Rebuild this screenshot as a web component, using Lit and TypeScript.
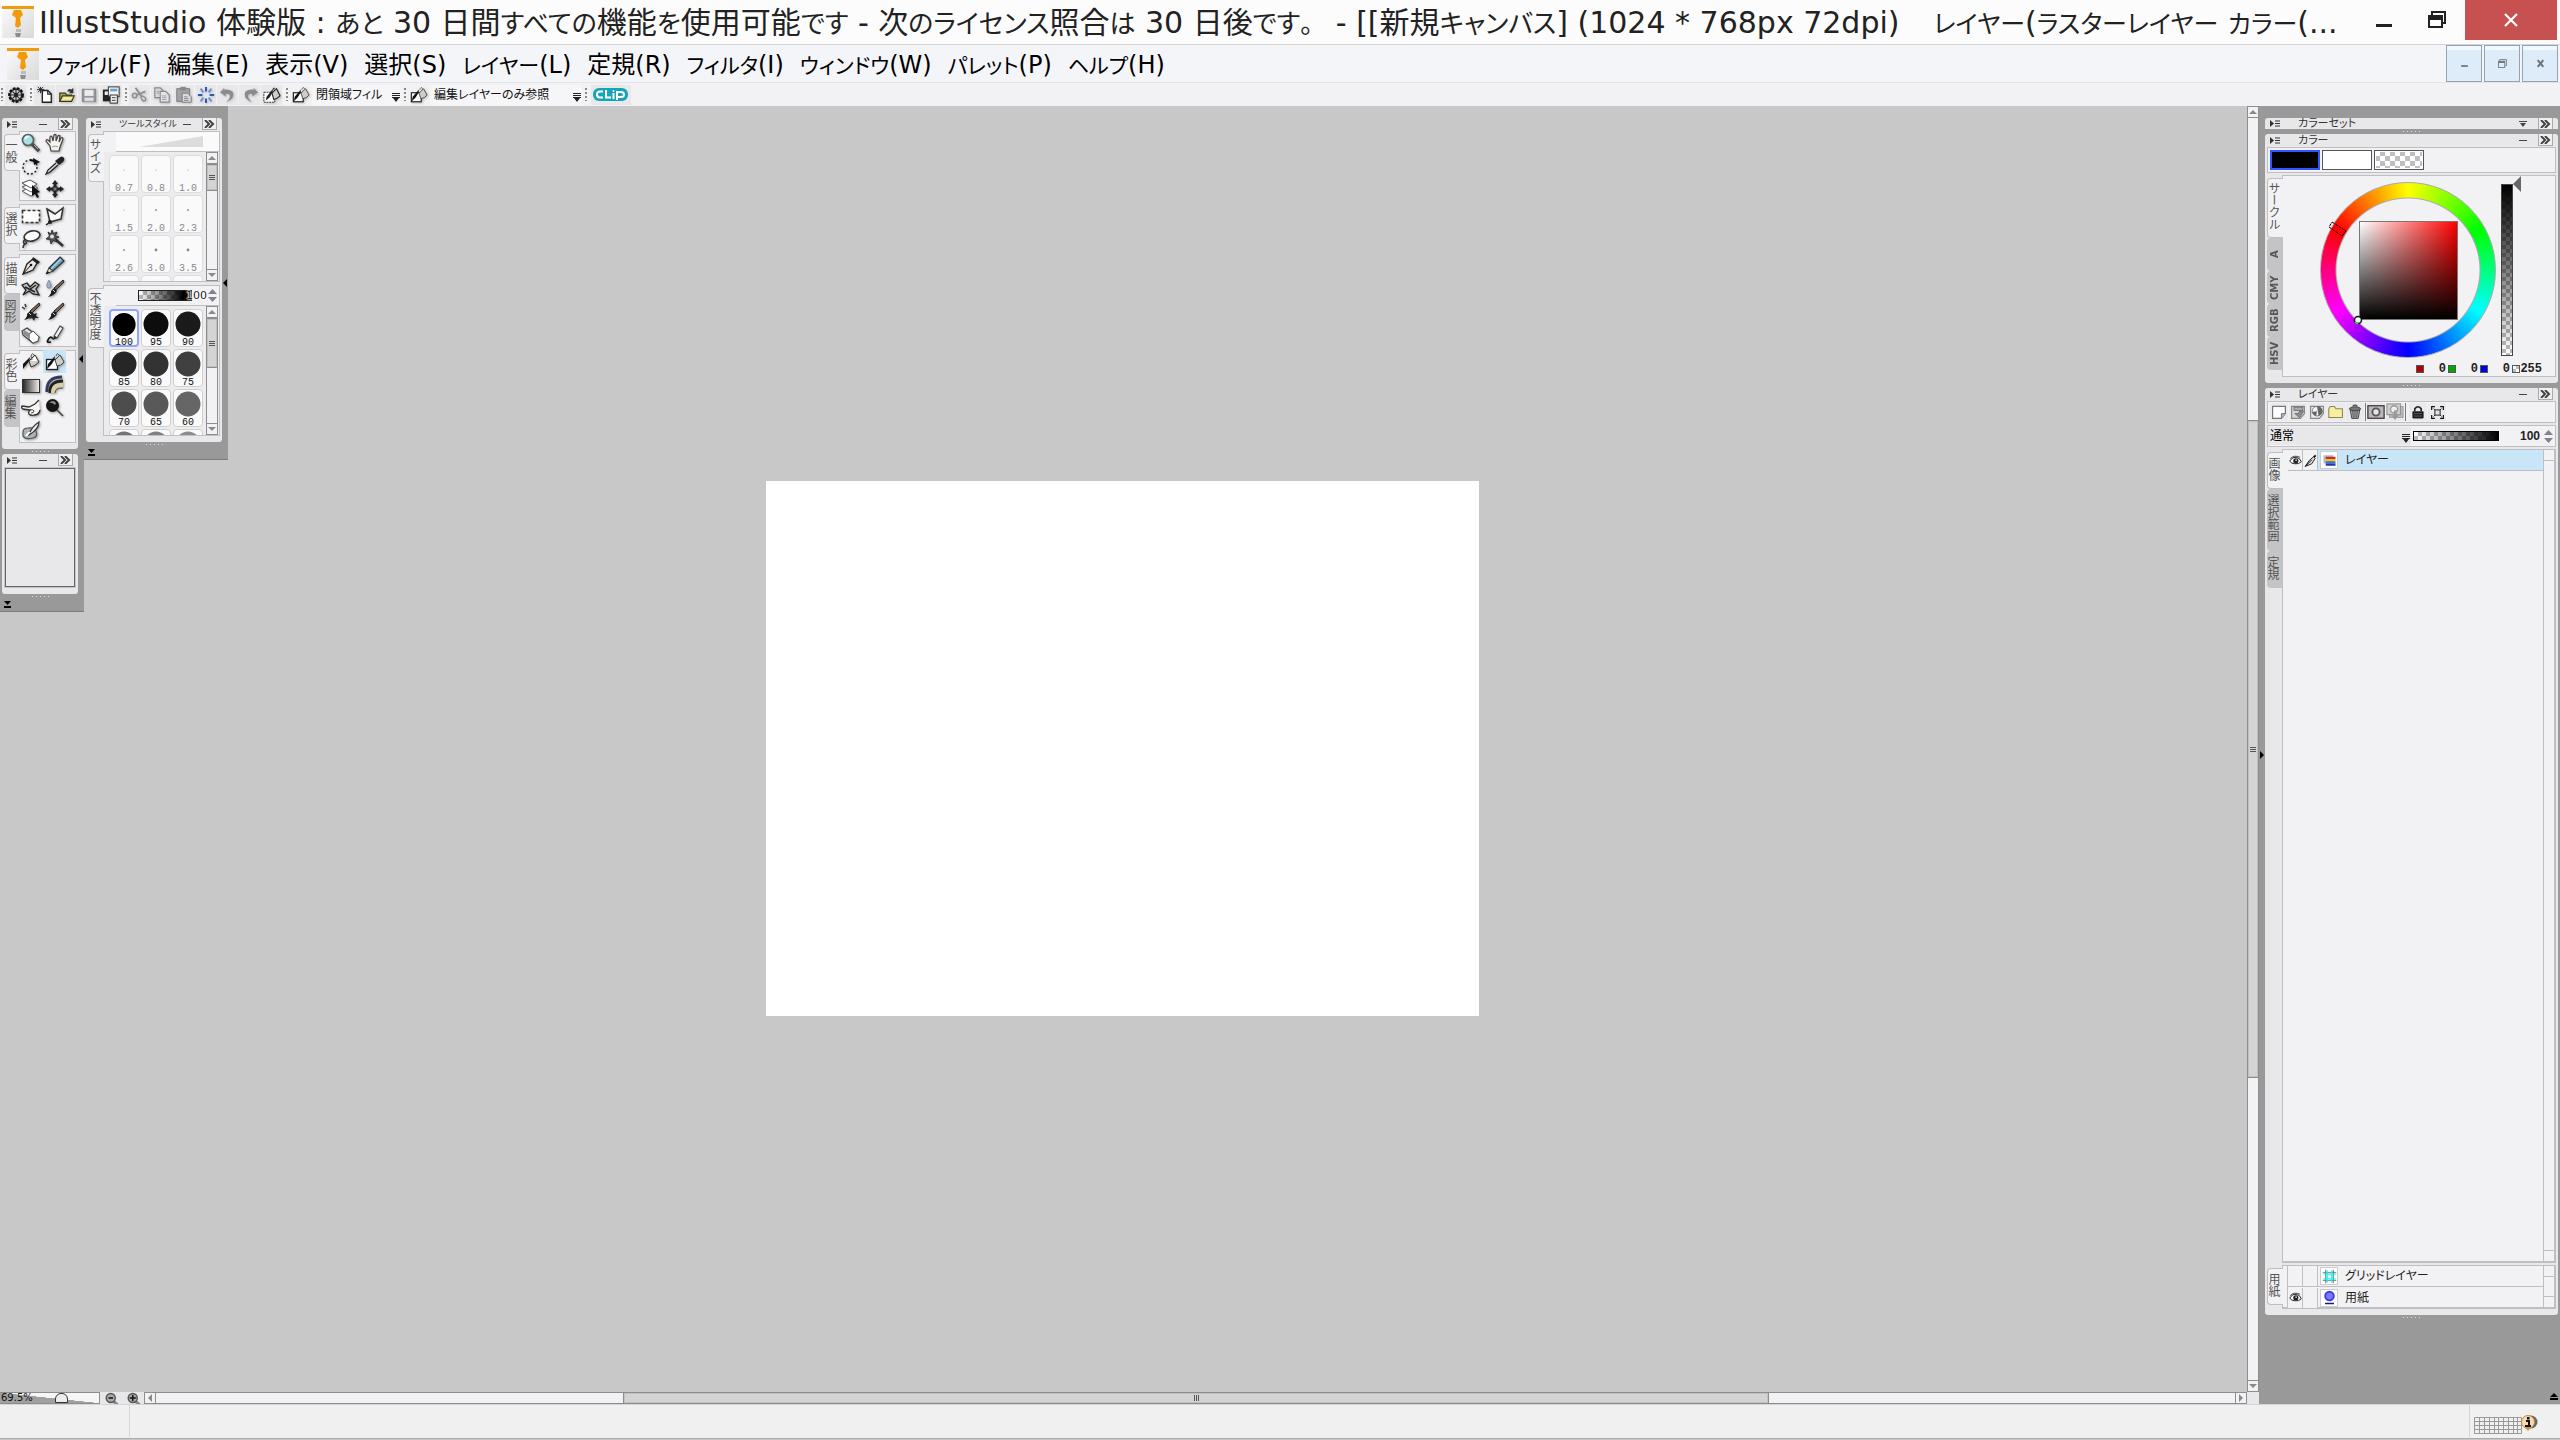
import { LitElement, html, svg, css, nothing } from "lit";
import { customElement, property } from "lit/decorators.js";
import { classMap } from "lit/directives/class-map.js";
import { styleMap } from "lit/directives/style-map.js";

const bucket = svg`
  <path d="M8 9 L14 3 L18 10 Q14 14 10 15 Z" fill="#cfcfca" stroke="#333" stroke-width="1"/>
  <path d="M10 9 L14 4 L16 9 Z" fill="#fff"/>
  <path d="M13 3 Q11 0 10 4 L11 8" fill="none" stroke="#555" stroke-width="1"/>
  <path d="M9 5 L2 12 L2 17 L5 13 Q9 9 9 5Z" fill="#111"/>`;

const brush = svg`
  <path d="M18 1 L19 3 L11 11 L9 9 Z" fill="#7a6656" stroke="#2a2320" stroke-width="1"/>
  <path d="M9 9 L12 12 Q9 17 3 18 Q7 14 6 12 Z" fill="#1a1a1a"/>
  <path d="M8 11 L10 13" stroke="#ddd" stroke-width="1"/>`;

const ICONS: Record<string, unknown> = {
  zoom: svg`<circle cx="7" cy="7" r="5.5" fill="#a9dfe0" stroke="#55605f" stroke-width="1.6"/><path d="M4 6 Q5 3 8 3.500" stroke="#fff" stroke-width="1.500" fill="none"/><path d="M11 11 L18 18" stroke="#4a4a4a" stroke-width="3.500"/><path d="M13 12 L17 16" stroke="#aaa" stroke-width="1"/>`,
  hand: svg`<path d="M6 18 L5 13 L1 8 Q1 6 3 7 L5 9 L5 4 Q6 2 7 4 L8 8 L9 2 Q10 1 11 2 L11 8 L13 3 Q14 2 15 3 L14 9 L16 5 Q18 4 18 6 L15 14 L14 18 Z" fill="#f6f2ee" stroke="#444" stroke-width="1.2"/><path d="M7 14 Q10 12 13 14" stroke="#999" fill="none"/>`,
  rotate: svg`<circle cx="9" cy="11" r="7" fill="none" stroke="#222" stroke-width="1.4" stroke-dasharray="2 2"/><path d="M12 2 L19 6 L13 9 Z" fill="#111"/><path d="M9 4 L14 5" stroke="#111" stroke-width="2"/>`,
  dropper: svg`<path d="M19 2 Q17 -1 14 2 L10 5 L14 9 L18 6 Q20 4 19 2Z" fill="#222"/><path d="M11 7 L3 14 L1 18 L5 16 L13 9" fill="#cfd6da" stroke="#222" stroke-width="1.200"/>`,
  layersel: svg`<path d="M1 12 L9 9 L17 13 L10 17 Z" fill="#fff" stroke="#666"/><path d="M1 8 L9 5 L17 9 L10 13 Z" fill="#fff" stroke="#666"/><path d="M1 4 L9 1 L16 5 L10 9 Z" fill="#fff" stroke="#555"/><path d="M11 6 L11 17 L14 15 L16 19 L18 18 L16 14 L19 13 Z" fill="#111"/>`,
  move: svg`<path d="M10 1 L13 5 H11.500 V8.500 H15 V7 L19 10 L15 13 V11.500 H11.500 V15 H13 L10 19 L7 15 H8.500 V11.500 H5 V13 L1 10 L5 7 V8.500 H8.500 V5 H7 Z" fill="#222"/><rect x="8" y="8" width="4" height="4" fill="#777" stroke="#222"/>`,
  marquee: svg`<rect x="1.500" y="4.500" width="17" height="12" fill="#fdfdfd" stroke="#333" stroke-width="1.600" stroke-dasharray="3 2"/>`,
  poly: svg`<path d="M2 3 L10 8 L18 2 L16 13 L5 16 Z" fill="#f8f8f8" stroke="#333" stroke-width="1.500"/><circle cx="5" cy="16" r="2" fill="#222"/><path d="M5 16 L1 19" stroke="#222" stroke-width="1.500"/>`,
  lasso: svg`<ellipse cx="11" cy="7" rx="8" ry="5" transform="rotate(-14 11 7)" fill="#fafafa" stroke="#333" stroke-width="1.600"/><path d="M4 10 Q1 14 4 15 Q7 14 4 12 M4 15 Q2 16 2 19" fill="none" stroke="#333" stroke-width="1.500"/>`,
  wand: svg`<path d="M9 9 L18 17" stroke="#333" stroke-width="2.500"/><path d="M7 1 L8.500 4.500 L12 3 L10.500 7 L14 8 L10.500 9.500 L12 13 L8 11.500 L6 15 L5 10.500 L1 10 L4.500 7 L3 3 L6 5 Z" fill="#555" stroke="#222" stroke-width=".8"/><circle cx="7" cy="7.500" r="2" fill="#ddd"/>`,
  pen: svg`<path d="M12 3 L16 7 L12 14 L2 18 L6 8 Z" fill="#e8e6e2" stroke="#222" stroke-width="1.300"/><path d="M2 18 L10 9" stroke="#111"/><path d="M12 1 L19 6 L17 8 L11 4Z" fill="#222"/><circle cx="10" cy="9" r="1.300" fill="#111"/>`,
  pencil: svg`<path d="M15 1 L19 5 L8 15 L4 12 Z" fill="#6f9bb8" stroke="#26343e" stroke-width="1.200"/><path d="M16 3 L6 13" stroke="#b9d3e3" stroke-width="1.300"/><path d="M4 12 L8 15 L1 18 Z" fill="#e6d7c3" stroke="#333"/><path d="M3 15 L1 18 L4 17Z" fill="#111"/>`,
  pattern: svg`<path d="M1 6 L6 4 L9 8 L14 3 L18 6 L15 10 L18 16 L12 15 L8 12 L2 16 L5 11 Z" fill="#b9c0ba" stroke="#222" stroke-width="1.300"/><path d="M4 8 L14 13 M8 11 L15 6" stroke="#222" stroke-width="1.500"/>`,
  waterbrush: svg`${brush}<path d="M4 1 Q0 7 3 9 Q7 9 6 6 Z" fill="#9fb0c8" stroke="#7788a0" stroke-width=".8"/>`,
  decobrush: svg`${brush}<path d="M11 10 L13 12 L16 11 L15 14 L18 16 L14 16 L13 19 L11 16 L8 17 L10 14 Z" fill="#222"/><path d="M4 2 L5 5 M1 5 L4 7" stroke="#333" stroke-width="1.500"/>`,
  brush,
  eraser: svg`<path d="M1 6 L6 3 L18 12 L17 16 L12 18 L2 10 Z" fill="#ddd" stroke="#444" stroke-width="1.200"/><path d="M8 9 L12 6 L18 12 L17 16 L12 18 L8 14Z" fill="#fff" stroke="#555"/><path d="M3 5 L9 9 L8 13 L2 9Z" fill="#8d8d8d"/>`,
  line: svg`<path d="M15 1 L18 3 L12 13 L9 11 Z" fill="#efefef" stroke="#444" stroke-width="1.100"/><path d="M9 11 L12 13 L8 15 Z" fill="#222"/><path d="M8 14 Q5 10 3 15 Q1 18 6 17" fill="none" stroke="#111" stroke-width="1.700"/>`,
  bucket,
  closedfill: svg`<rect x="1.500" y="7.500" width="11" height="10" fill="#fff" stroke="#222" stroke-width="1.300"/><path d="M10 8 L15 3 L19 10 Q16 14 12 14 Z" fill="#cfcfca" stroke="#444"/><path d="M14 3 Q12 0 11 4" fill="none" stroke="#555"/><path d="M10 4 L3 12 L2 17 L6 13 Q10 8 10 4Z" fill="#111"/>`,
  gradient: svg`<defs><linearGradient id="gr"><stop offset="0" stop-color="#222"/><stop offset="1" stop-color="#f6f0ee"/></linearGradient></defs><rect x="1.500" y="4.500" width="17" height="13" fill="url(#gr)" stroke="#333"/>`,
  curve: svg`<path d="M2 17 Q1 2 17 2" fill="none" stroke="#333b60" stroke-width="3"/><path d="M5 18 Q4 6 18 6" fill="none" stroke="#222" stroke-width="3"/><path d="M8 18 Q8 9 18 10" fill="none" stroke="#d6d2a4" stroke-width="4"/><path d="M10 18 Q10 13 18 13" fill="none" stroke="#555" stroke-width="1"/>`,
  finger: svg`<path d="M18 2 L14 6 L8 9 L1 8 Q0 10 2 11 L9 12 Q7 14 8 16 Q10 18 13 17 Q18 17 19 12" fill="#f8f5f0" stroke="#333" stroke-width="1.300"/><path d="M9 12 Q12 11 13 13 Q13 15 10 15" fill="none" stroke="#444"/>`,
  dodge: svg`<path d="M11 11 L18 18" stroke="#444" stroke-width="1.600"/><circle cx="7.500" cy="7.500" r="6.500" fill="#151515"/><path d="M4 5 Q8 1 11 5 L10 7 Q7 4 4 5Z" fill="#8d8d8d"/>`,
  blur: svg`<path d="M2 11 Q2 7 7 7 Q13 6 15 10 Q17 16 12 17 Q4 19 2 15 Z" fill="#a9b4ad" stroke="#555" stroke-width="1.200"/><path d="M18 1 Q18 8 8 14 Q10 6 18 1Z" fill="#e9e9e5" stroke="#333" stroke-width="1.200"/><path d="M5 15 Q8 11 9 12" stroke="#fff" stroke-width="2" fill="none"/>`,

  gear: svg`<circle cx="10" cy="10" r="7.500" fill="#3a3a3a" stroke="#111" stroke-width="2.500" stroke-dasharray="3 1.500"/><circle cx="10" cy="10" r="5.500" fill="#d8d8d8"/><path d="M10 4V16M4 10H16M6 6L14 14M14 6L6 14" stroke="#222" stroke-width="1.300"/><circle cx="10" cy="10" r="2.200" fill="#222"/>`,
  newdoc: svg`<path d="M7 5 H13 L17 9 V18 H7 Z" fill="#fff" stroke="#222" stroke-width="1.500"/><path d="M13 5 V9 H17" fill="none" stroke="#222" stroke-width="1.200"/><path d="M5 1V8M1 4H9M2 1L8 7M8 1L2 7" stroke="#222" stroke-width="1"/>`,
  open: svg`<path d="M2 8 H8 L10 10 H15 V17 H2 Z" fill="#b4ab5a" stroke="#3b3716" stroke-width="1.300"/><path d="M5 11 H18 L15 17 H2 Z" fill="#f1eb9a" stroke="#3b3716" stroke-width="1.300"/><path d="M10 6 Q12 2 15 4 L17 2 V8 H12 L14 6" fill="#333"/>`,
  save: svg`<path d="M2 3 H18 V18 H2 Z" fill="#9a9a9e"/><rect x="5" y="3" width="10" height="8" fill="#ededf0"/><rect x="5" y="13" width="10" height="5" fill="#e2e2e6"/><rect x="3" y="4" width="14" height="13" fill="none" stroke="#88888c"/>`,
  saveall: svg`<rect x="1" y="4" width="12" height="13" fill="#222"/><rect x="3" y="6" width="7" height="4" fill="#eee"/><rect x="7" y="1" width="12" height="11" fill="#f6f6f6" stroke="#222"/><rect x="9" y="3" width="8" height="3" fill="#6aa5cf"/><rect x="9" y="10" width="8" height="9" fill="#eee" stroke="#222"/><path d="M11 13H15M11 16H15" stroke="#333"/>`,
  cut: svg`<path d="M5 2 L12 12 M16 6 L6 10" stroke="#8e8e92" stroke-width="2"/><circle cx="4" cy="10.500" r="2.500" fill="none" stroke="#8e8e92" stroke-width="1.600"/><path d="M11 11 Q18 12 16 16 Q12 18 11 12" fill="none" stroke="#8e8e92" stroke-width="1.600"/>`,
  copy: svg`<path d="M2 2 H8 L11 5 V13 H2Z" fill="#d8d8dc" stroke="#88888c" stroke-width="1.300"/><path d="M8 6 H14 L18 10 V18 H8Z" fill="#e4e4e8" stroke="#88888c" stroke-width="1.300"/><path d="M10 11H15M10 13H15M10 15H15M4 6H7M4 8H7" stroke="#9a9a9e"/>`,
  paste: svg`<rect x="2" y="3" width="14" height="14" fill="#a2a2a6" stroke="#77777b"/><rect x="6" y="1" width="6" height="4" fill="#88888c"/><path d="M8 8 H14 L18 12 V18 H8Z" fill="#dadade" stroke="#77777b"/><path d="M10 12H14M10 14H15M10 16H15" stroke="#88888c"/>`,
  burst: svg`<g stroke="#2b58b8" stroke-width="2.200"><path d="M10 1V6M10 14V19M1 10H6M14 10H19"/><path d="M4 3L7 7M16 3L13 7M4 17L7 13M16 17L13 13" stroke="#6e92d6"/></g>`,
  undo: svg`<path d="M3 4 Q16 3 16 9 Q16 15 8 18 Q13 13 12 10 Q11 8 7 9 L8 12 L1 7 L7 2" fill="#8a8a8e"/>`,
  redo: svg`<path d="M17 4 Q4 3 4 9 Q4 15 12 18 Q7 13 8 10 Q9 8 13 9 L12 12 L19 7 L13 2" fill="#8a8a8e"/>`,
  fillsel: svg`<rect x="1" y="7" width="12" height="11" fill="#fff" stroke="#222" stroke-dasharray="2 1"/><path d="M10 8 L15 3 L19 11 Q16 14 12 15 Z" fill="#cfcfca" stroke="#222" stroke-width="1.200"/><path d="M13 4 Q13 0 11 3 L4 12 L3 16 L7 13 Q11 8 11 4" fill="#222"/>`,

  newlayer: svg`<path d="M2 3 H18 V12 L13 18 H2 Z" fill="#fcfcfc" stroke="#777" stroke-width="1.500"/><path d="M18 12 H13 V18" fill="#b5b5b5" stroke="#777" stroke-width="1.200"/>`,
  mergelayer: svg`<path d="M2 3 H18 V12 L13 18 H2 Z" fill="#d6d6d6" stroke="#888" stroke-width="1.500"/><rect x="5" y="4" width="11" height="4" fill="#aaa" stroke="#666"/><path d="M12 9 H17 L12 17 L6 12 H10Z" fill="#8b8b8b" stroke="#666"/>`,
  masklayer: svg`<path d="M2 3 H18 V12 L13 18 H2 Z" fill="#eee" stroke="#888" stroke-width="1.500"/><circle cx="10" cy="9" r="6" fill="#f5f5f5" stroke="#666"/><path d="M10 3 A6 6 0 0 1 12 15 Z M10 9 L4 10 Q5 14 9 15Z" fill="#666"/>`,
  folder: svg`<path d="M1 6 L3 3 H8 L10 6 H18 V17 H1 Z" fill="#f7eea0" stroke="#8b8552" stroke-width="1.300"/>`,
  trash: svg`<path d="M4 7 H16 L14 18 H6 Z" fill="#aaa" stroke="#444" stroke-width="1.200"/><path d="M7 8 L8 17 M10 8 V17 M13 8 L12 17" stroke="#444"/><ellipse cx="10" cy="6" rx="7" ry="2.500" fill="#777" stroke="#333"/><path d="M7 3 Q10 0 13 3" stroke="#444" fill="none" stroke-width="1.500"/>`,
  mask: svg`<rect x="1" y="3" width="18" height="14" fill="#b9b9bc" stroke="#4b4046" stroke-width="1.500"/><circle cx="10" cy="10" r="4" fill="#e6e6e6" stroke="#555" stroke-width="2"/>`,
  maskapply: svg`<rect x="4" y="4" width="15" height="12" fill="#bbb" stroke="#999"/><rect x="1" y="1" width="15" height="12" fill="#cfcfcf" stroke="#888"/><circle cx="9" cy="7" r="4" fill="#eee" stroke="#999" stroke-width="1.500"/><path d="M9 8 V14 H6 L10 19 L14 14 H12 V8Z" fill="#999"/>`,
  lock: svg`<path d="M6 9 V6 Q10 1 14 6 V9" fill="none" stroke="#222" stroke-width="2"/><rect x="3" y="9" width="14" height="9" rx="1" fill="#1e1e22"/><path d="M5 12H15M5 15H15" stroke="#666" stroke-width="1"/>`,
  frame: svg`<path d="M6 1H1V6M14 1H19V6M6 19H1V14M14 19H19V14" fill="none" stroke="#111" stroke-width="1.800"/><path d="M4 4L6 6M16 4L14 6M4 16L6 14M16 16L14 14" stroke="#111" stroke-width="1.500"/><rect x="6" y="6" width="8" height="8" fill="#dfe0ee" stroke="#111" stroke-width="1.400"/>`,
  eye: svg`<path d="M1 11 Q5 4 11 5 Q17 6 19 12 Q15 16 9 15 Q4 15 1 11Z" fill="#fff" stroke="#222" stroke-width="1.500"/><circle cx="10.500" cy="10.500" r="4" fill="#222"/><circle cx="11" cy="9.500" r="1.300" fill="#ccc"/><path d="M2 7 Q8 1 17 5" stroke="#444" fill="none" stroke-width="1.500"/>`,
  dip: svg`<path d="M17 1 L19 3 L16 6 L14 4Z" fill="#111"/><path d="M15 4 L17 7 L12 15 L2 19 L8 10 Z" fill="#ddd" stroke="#222" stroke-width="1.500"/><path d="M2 19 L12 9" stroke="#111" stroke-width="1.500"/>`,
  raster: svg`<rect x="2" y="3" width="13" height="11" fill="#b4b8c4"/><rect x="5" y="5" width="13" height="3" fill="#c9302c"/><rect x="5" y="8" width="13" height="3" fill="#f3c512"/><rect x="5" y="11" width="13" height="3" fill="#3a6fd8"/><rect x="5" y="14" width="13" height="3" fill="#2438a0"/>`,
  gridlayer: svg`<rect x="3" y="3" width="14" height="14" fill="#fff"/><path d="M5 1V19M15 1V19M1 5H19M1 15H19" stroke="#777" stroke-width="1.500"/><path d="M7 2V18M13 2V18M2 7H18M2 13H18" stroke="#0ff" stroke-width="1.600"/>`,
  paper: svg`<circle cx="10" cy="8" r="7" fill="#3b3be8"/><circle cx="10" cy="8" r="4.500" fill="#7a7aff"/><path d="M5 13 Q10 17 15 13 L12 15 H8Z" fill="#1a1aa0"/><rect x="4" y="17" width="12" height="2" fill="#1a1a80"/>`,
  zoomout: svg`<path d="M12 12 L18 17" stroke="#8a8a8a" stroke-width="4"/><circle cx="9" cy="8" r="6" fill="#a9a9a9" stroke="#555" stroke-width="2"/><path d="M6 8H12" stroke="#111" stroke-width="2"/>`,
  zoomin: svg`<path d="M12 12 L18 17" stroke="#8a8a8a" stroke-width="4"/><circle cx="9" cy="8" r="6" fill="#a9a9a9" stroke="#555" stroke-width="2"/><path d="M5 8H13M9 4V12" stroke="#111" stroke-width="2"/>`,
};

const icon = (name: string) =>
  html`<svg class="ico" viewBox="0 0 20 20" aria-hidden="true">${ICONS[name]}</svg>`;

/* Kana runs are set a step smaller than kanji and Latin; the full stop keeps its full width. */
const mixed = (text: string) =>
  text.split(/([ぁ-んァ-ヶー]+|。)/).map(part =>
    part === "。" ? html`<span class="stop">${part}</span>`
    : /^[ぁ-んァ-ヶー]/.test(part) ? html`<span class="kana">${part}</span>` : part);

const dropMark = html`<svg class="drop" viewBox="0 0 8 9" aria-hidden="true"><path d="M0 .5H8M0 2.500H8M0 4.500H8" stroke="#222" stroke-width="1"/><path d="M1 5H7L4 9Z" fill="#222"/></svg>`;

const spinner = (what: string) => html`
  <span class="spin">
    <button aria-label="${what}を上げる"><svg viewBox="0 0 9 5"><path d="M0 5L4.500 0L9 5Z" fill="#85808f"/></svg></button>
    <button aria-label="${what}を下げる"><svg viewBox="0 0 9 5"><path d="M0 0L4.500 5L9 0Z" fill="#85808f"/></svg></button>
  </span>`;

const shared = css`
  * { box-sizing: border-box; }
  :host {
    font-family: "DejaVu Sans", "Noto Sans CJK JP", sans-serif;
    font-feature-settings: "palt";
    color: #222;
  }
  button, select, input {
    font: inherit;
    font-feature-settings: inherit;
    color: inherit;
    margin: 0;
    padding: 0;
    border: 0;
    border-radius: 0;
    background: none;
    appearance: none;
    outline: none;
  }
  button { display: grid; place-items: center; }
  svg { display: block; }
  .spin { display: grid; grid-template-rows: 5px 5px; gap: 3px; width: 9px; }
  .spin svg { width: 9px; height: 5px; }
  .drop { width: 8px; height: 9px; }
`;

@customElement("scroll-bar")
class ScrollBar extends LitElement {
  @property() dir = "v";
  @property({ type: Array }) parts = [1, 1, 1];

  static styles = [shared, css`
    :host { display: flex; background: #f2f2f4; }
    .bar { display: flex; flex: 1; min-width: 0; min-height: 0; }
    .bar.v { flex-direction: column; border: 1px solid #8d8d8d; border-top: 0; border-bottom: 0; }
    .bar.h { border: 1px solid #8d8d8d; border-left: 0; border-right: 0; }
    .end { flex: none; background: #f2f2f4; }
    .v .end { height: 12px; border: solid #8d8d8d; border-width: 1px 0; }
    .h .end { width: 12px; border: solid #8d8d8d; border-width: 0 1px; }
    .end svg { width: 8px; height: 8px; }
    .thumb { display: grid; place-items: center; background: #d4d4d4; border: 1px solid #8d8d8d; box-shadow: inset 0 0 0 1px #c0c0c0; }
    .v .thumb { border-width: 1px 0; }
    .h .thumb { border-width: 0 1px; }
    .grip { width: 6px; height: 5px; background: repeating-linear-gradient(#555 0 1px, transparent 1px 2px); }
    .h .grip { width: 5px; height: 6px; background: repeating-linear-gradient(90deg, #555 0 1px, transparent 1px 2px); }
    .part { min-height: 0; min-width: 0; }
  `];

  render() {
    const v = this.dir === "v";
    const flex = (n: number) => styleMap({ flex: `${n} 1 0` });
    return html`
      <div class="bar ${this.dir}">
        <button class="end" aria-label=${v ? "上へ" : "左へ"}>
          <svg viewBox="0 0 8 8"><path d=${v ? "M0 6L4 2L8 6Z" : "M6 0L2 4L6 8Z"} fill="#8a8a8a"/></svg>
        </button>
        <div class="part" style=${flex(this.parts[0])}></div>
        <div class="thumb" style=${flex(this.parts[1])}><span class="grip"></span></div>
        <div class="part" style=${flex(this.parts[2])}></div>
        <button class="end" aria-label=${v ? "下へ" : "右へ"}>
          <svg viewBox="0 0 8 8"><path d=${v ? "M0 2L4 6L8 2Z" : "M2 0L6 4L2 8Z"} fill="#8a8a8a"/></svg>
        </button>
      </div>`;
  }
}

@customElement("tool-panel")
class ToolPanel extends LitElement {
  @property() heading = "";
  @property({ type: Boolean }) folded = false;
  @property({ type: Boolean }) right = false;

  static styles = [shared, css`
    :host { display: flex; flex-direction: column; }
    .panel { flex: 1; display: flex; flex-direction: column; background: #e8e8ea; border-radius: 3px; padding: 0 2px 6px; }
    .panel.folded { flex: none; padding-bottom: 0; border-radius: 3px 3px 0 0; }
    .head { display: flex; align-items: center; height: 13px; flex: none; padding: 0 3px; }
    .menu svg { width: 10px; height: 7px; }
    h2 { flex: 1; min-width: 0; margin: 0; font-size: 9px; line-height: 13px; font-weight: 400; white-space: nowrap; padding-left: 18px; color: #333; }
    .right h2 { font-size: 11px; }
    .folded .head { height: 11px; }
    .folded h2 { line-height: 11px; }
    .min { width: 8px; height: 11px; margin-right: 11px; }
    .min svg { width: 8px; height: 8px; }
    .more { width: 15px; height: 12px; border: 1px solid #aaa; border-top: 0; background: #f0f0f2; align-self: start; }
    .folded .more { height: 11px; border-bottom: 0; }
    .more svg { width: 11px; height: 8px; }
    .dots { height: 5px; display: grid; place-items: center; }
    .dots span { width: 17px; height: 1px; background: repeating-linear-gradient(90deg, #ddd 0 1px, transparent 1px 4px); }
  `];

  render() {
    return html`
      <section class="panel ${classMap({ folded: this.folded, right: this.right })}">
        <header class="head">
          <button class="menu" aria-label="パレットメニュー"><svg viewBox="0 0 10 7"><path d="M0 0L4 3.500L0 7Z" fill="#333"/><path d="M5 1H10M5 3.500H10M5 6H10" stroke="#333"/></svg></button>
          <h2>${this.heading}</h2>
          <button class="min" aria-label="最小化"><svg viewBox="0 0 8 8">${this.folded
            ? svg`<path d="M0 1.500H8" stroke="#444"/><path d="M1 3H7L4 7Z" fill="#444"/>`
            : svg`<rect y="3" width="8" height="1" fill="#444"/>`}</svg></button>
          <button class="more" aria-label="折りたたむ"><svg viewBox="0 0 11 8"><path d="M1 0L5 4L1 8M5 0L9 4L5 8" fill="none" stroke="#444" stroke-width="2"/></svg></button>
        </header>
        <slot></slot>
      </section>
      <div class="dots"><span></span></div>`;
  }
}

const paneStyles = css`
  .row { display: flex; min-height: 0; }
  .tabs { display: flex; flex-direction: column; width: 15px; flex: none; padding-top: 3px; }
  .tab {
    width: 15px;
    display: flex;
    align-items: center;
    justify-content: center;
    writing-mode: vertical-rl;
    font-family: "Noto Sans CJK JP", sans-serif;
    font-size: 12px;
    line-height: 12px;
    font-feature-settings: normal;
    color: #555;
    background: #c4c4c6;
    border-radius: 4px 0 0 4px;
    height: 37px;
    padding: 0 3px 4px 0;
    white-space: nowrap;
  }
  .tab.on { position: relative; z-index: 1; width: 16px; background: #f2f2f4; border: 1px solid #bfbfc3; border-right: 0; }
  .tab.tall { height: 60px; }
  .tab.mid { height: 48px; }
  .tab.turn { height: 33px; padding: 0; line-height: 14px; transform: rotate(180deg); border-radius: 0 4px 4px 0; font-family: "DejaVu Sans", sans-serif; font-size: 10px; font-weight: 700; }
  .box { flex: 1; min-width: 0; border: 1px solid #bfbfc3; background: #f2f2f4; }
`;

interface ToolGroup { tabs: [string, boolean][]; tools: [string, string][]; }
const GROUPS: ToolGroup[] = [
  { tabs: [["一般", true]], tools: [["zoom", "ズーム"], ["hand", "手のひら"], ["rotate", "回転"], ["dropper", "スポイト"], ["layersel", "レイヤー選択"], ["move", "移動"]] },
  { tabs: [["選択", true]], tools: [["marquee", "長方形選択"], ["poly", "折れ線選択"], ["lasso", "投げなわ"], ["wand", "マジックワンド"]] },
  { tabs: [["描画", true], ["図形", false]], tools: [["pen", "ペン"], ["pencil", "鉛筆"], ["pattern", "パターン"], ["waterbrush", "水彩"], ["decobrush", "飾りブラシ"], ["brush", "筆"], ["eraser", "消しゴム"], ["line", "線修正"]] },
  { tabs: [["彩色", true], ["編集", false]], tools: [["bucket", "塗りつぶし"], ["closedfill", "閉領域フィル"], ["gradient", "グラデーション"], ["curve", "等高線塗り"], ["finger", "指先"], ["dodge", "覆い焼き"], ["blur", "ぼかし"]] },
];

@customElement("tool-palette")
class ToolPalette extends LitElement {
  static styles = [shared, paneStyles, css`
    :host { display: block; }
    .groups { display: flex; flex-direction: column; gap: 3px; }
    .grid { display: grid; grid-template-columns: 24px 23px; grid-auto-rows: 23px; border: 0; padding-bottom: 1px; box-shadow: inset 0 0 0 1px #bfbfc3; }
    .ico { width: 20px; height: 20px; filter: drop-shadow(1px 1px 1px #999); }
    .tool.on { background: #c8e6f8; }
  `];
  render() {
    return html`<div class="groups">${GROUPS.map(g => html`
      <div class="row group">
        <div class="tabs">${g.tabs.map(([t, on]) => html`<button class="tab ${classMap({ on })}">${t}</button>`)}</div>
        <div class="box grid">${g.tools.map(([n, label]) => html`
          <button class="tool ${classMap({ on: n === "closedfill" })}" aria-label=${label}>${icon(n)}</button>`)}</div>
      </div>`)}</div>`;
  }
}

@customElement("style-palette")
class StylePalette extends LitElement {
  static styles = [shared, paneStyles, css`
    :host { display: block; }
    .stack { display: flex; flex-direction: column; gap: 3px; }
    .box { display: flex; flex-direction: column; height: 151px; }
    .strip { height: 20px; margin-left: 12px; border-bottom: 1px solid #bfbfc3; background: #fafafa; display: flex; align-items: center; justify-content: flex-end; flex: none; }
    .slope { width: 64px; height: 11px; margin-right: 16px; }
    .body { flex: 1; display: flex; min-height: 0; background: #ececee; }
    .cells { flex: 1; display: grid; grid-template-columns: 30px 30px 30px; grid-auto-rows: 38px; gap: 2px; padding: 3px 0 0 5px; overflow: hidden; align-content: start; }
    .cell { display: flex; flex-direction: column; align-items: center; height: 38px; border: 1px solid #ddd; border-radius: 4px; background: #fafafa; color: #888; }
    .cell span { font-family: "Liberation Mono", monospace; font-size: 10px; line-height: 10px; height: 8px; }
    .cell svg { flex: none; width: 28px; height: 28px; }
    .ink .cell { border-color: #d0d0d0; color: #111; }
    .ink .cell.on { border: 2px solid #8fa4ff; }
    .ink .cell.on svg { height: 27px; width: 26px; }
    scroll-bar { width: 12px; margin-right: 1px; flex: none; }
    .amount { display: flex; align-items: center; justify-content: flex-end; padding-right: 2px; background: #f2f2f4; }
    .level { width: 54px; height: 11px; border: 1px solid #222; background: linear-gradient(90deg, transparent, #000 85%), repeating-conic-gradient(#bbb 0 25%, #fff 0 50%) 0 0 / 8px 8px; }
    .level::-webkit-slider-thumb { appearance: none; width: 1px; height: 9px; background: #000; }
    .num { width: 25px; margin-left: -8px; margin-right: -1px; font-size: 11px; height: 13px; text-align: center; position: relative; z-index: 1; text-shadow: 0 0 1px #fff, 0 0 1px #fff, 0 0 2px #fff, 0 0 2px #fff, 0 0 2px #fff; }
  `];
  render() {
    const sizes = ["0.7", "0.8", "1.0", "1.5", "2.0", "2.3", "2.6", "3.0", "3.5", "", "", ""];
    const inks = [100, 95, 90, 85, 80, 75, 70, 65, 60, 55, 50, 45];
    return html`
      <div class="stack">
        <div class="row">
          <div class="tabs"><button class="tab mid on">サイズ</button></div>
          <div class="box">
            <div class="strip"><svg class="slope" viewBox="0 0 64 11" preserveAspectRatio="none"><path d="M0 11L64 0V11Z" fill="#dcdcdc"/></svg></div>
            <div class="body">
              <div class="cells">${sizes.map((s, i) => html`
                <button class="cell" aria-label="サイズ ${s}"><svg viewBox="0 0 28 28"><circle cx="14" cy="14" r=${i < 4 ? 0.6 : i < 7 ? 0.9 : 1.4} fill="#888"/></svg><span>${s}</span></button>`)}</div>
              <scroll-bar .parts=${[0, 25, 80]}></scroll-bar>
            </div>
          </div>
        </div>
        <div class="row">
          <div class="tabs"><button class="tab tall on">不透明度</button></div>
          <div class="box">
            <div class="strip amount">
              <input class="level" type="range" min="0" max="100" value="100" aria-label="不透明度">
              <input class="num" type="text" value="100" aria-label="不透明度の値">
              ${spinner("不透明度")}
            </div>
            <div class="body">
              <div class="cells ink">${inks.map(n => {
                const g = Math.round(255 * (100 - n) / 100);
                return html`<button class="cell ${classMap({ on: n === 100 })}" aria-label="不透明度 ${n}"><svg viewBox="0 0 28 28"><circle cx="14" cy="14" r="12.500" fill="rgb(${g},${g},${g})"/></svg><span>${n > 55 ? n : nothing}</span></button>`;
              })}</div>
              <scroll-bar .parts=${[0, 49, 56]}></scroll-bar>
            </div>
          </div>
        </div>
      </div>`;
  }
}

@customElement("color-palette")
class ColorPalette extends LitElement {
  static styles = [shared, paneStyles, css`
    :host { display: flex; flex-direction: column; gap: 2px; }
    .swatches { display: flex; gap: 2px; padding: 2px; flex: none; }
    .sw { width: 50px; height: 20px; border: 1px solid #555; background: #fff; }
    .sw.on { border: 2px solid #3355ff; background: #000; }
    .sw.none { box-shadow: inset 0 0 0 1px #fff; background: repeating-conic-gradient(#bfbfbf 0 25%, #fff 0 50%) 0 0 / 10px 10px; }
    .wheelbox { display: flex; flex-direction: column; height: 202px; }
    .area { display: flex; padding: 6px 34px 0 37px; height: 184px; justify-content: space-between; }
    .ring { display: grid; place-items: center; width: 176px; height: 176px; border-radius: 50%; border: 1px solid #aaa;
      background: radial-gradient(circle, #f2f2f4 0 71px, #aaa 72px, transparent 73px), conic-gradient(from -60deg, #f00, #ff0, #0f0, #0ff, #00f, #f0f, #f00); }
    .square { width: 99px; height: 99px; border: 1px solid #777; background: linear-gradient(transparent, #000), linear-gradient(90deg, #fff, #f00); }
    .wheel { display: grid; }
    .wheel > * { grid-area: 1 / 1; }
    .marks { width: 176px; height: 176px; z-index: 1; }
    .alpha { display: flex; }
    .alpha .track { width: 12px; height: 172px; margin-top: 2px; border: 1px solid #444; background: linear-gradient(#000, transparent), repeating-conic-gradient(#bbb 0 25%, #fff 0 50%) 0 0 / 8px 8px; }
    .alpha svg { width: 8px; height: 16px; margin-top: -6px; }
    .values { display: flex; justify-content: flex-end; padding: 3px 13px 0 0; font: 700 12px/14px "Liberation Mono", monospace; }
    .values span { display: flex; align-items: center; justify-content: space-between; width: 30px; margin-left: 2px; }
    .values i { width: 8px; height: 8px; border: 1px solid #555; }
    .values .r { background: #b40000; } .values .g { background: #00a800; } .values .b { background: #0000dc; }
    .values .a { background: repeating-conic-gradient(#bbb 0 25%, #fff 0 50%) 0 0 / 6px 6px; }
  `];
  render() {
    return html`
      <div class="box swatches">
        <button class="sw on" aria-label="描画色"></button>
        <button class="sw" aria-label="背景色"></button>
        <button class="sw none" aria-label="透明"></button>
      </div>
      <div class="row">
        <div class="tabs">
          <button class="tab tall on">サークル</button>
          ${["A", "CMY", "RGB", "HSV"].map(t => html`<button class="tab turn">${t}</button>`)}
        </div>
        <div class="box wheelbox">
          <div class="area">
            <div class="wheel">
              <div class="ring"><div class="square"></div></div>
              <svg class="marks" viewBox="0 0 176 176">
                <path d="M12 40L26 49L22 54L9 45Z" fill="none" stroke="#000" stroke-dasharray="3 1"/>
                <circle cx="38" cy="138" r="3.500" fill="#fff" stroke="#111" stroke-width="1.500"/><path d="M35 140L38 142" stroke="#3c3" stroke-width="2"/>
              </svg>
            </div>
            <div class="alpha"><div class="track"></div><svg viewBox="0 0 8 16"><path d="M8 0V16L0 8Z" fill="#666"/></svg></div>
          </div>
          <div class="values">
            <span><i class="r"></i>0</span><span><i class="g"></i>0</span><span><i class="b"></i>0</span><span><i class="a"></i>255</span>
          </div>
        </div>
      </div>`;
  }
}

@customElement("layer-palette")
class LayerPalette extends LitElement {
  static styles = [shared, paneStyles, css`
    :host { display: flex; flex-direction: column; gap: 2px; flex: 1; min-height: 0; }
    .tools { display: flex; align-items: center; height: 22px; flex: none; padding-left: 2px; }
    .tools button { width: 18px; height: 18px; margin-right: 1px; background: #eaeaec; }
    .tools .ico { width: 16px; height: 16px; }
    .tools .lock { margin-left: 2px; }
    .tools .frame .ico { width: 13px; height: 13px; }
    .sep { width: 1px; height: 18px; background: #777; margin: 0 1px 0 0; }
    .tools .wide .ico { width: 18px; height: 18px; }
    .blend { display: flex; align-items: center; height: 22px; flex: none; padding: 0 2px 0 0; }
    .mode { display: flex; align-items: center; width: 143px; height: 18px; background: #e8e8ea; margin-right: 2px; }
    .mode select { flex: 1; padding-left: 2px; font-size: 12px; height: 18px; color: #000; }
    .mode .drop { margin: 5px 1px 0 0; }
    .level { width: 86px; height: 10px; border: 1px solid #000; background: linear-gradient(90deg, transparent, #000), repeating-conic-gradient(#bbb 0 25%, #fff 0 50%) 0 0 / 8px 8px; }
    .level::-webkit-slider-thumb { appearance: none; width: 1px; height: 8px; background: #000; }
    .num { flex: 1; min-width: 0; text-align: right; font: 700 12px/18px "Liberation Sans", sans-serif; padding-right: 4px; }
    .main { flex: 1; }
    .list { display: flex; padding-left: 4px; border-right-width: 2px; border-bottom-width: 2px; }
    .rows { flex: 1; border-left: 1px solid #bfbfc3; }
    .main .rows { border-left-color: transparent; }
    .layer { display: grid; grid-template-columns: 15px 15px 20px 1fr; height: 21px; align-items: center; border-bottom: 1px solid #bfbfc3; font-size: 12px; line-height: 20px; }
    .layer.low { border-bottom: 0; }
    .layer > * { height: 20px; }
    .cell { display: grid; place-items: center; border-right: 1px solid #bfbfc3; background: #f2f2f4; }
    .cell .ico { width: 13px; height: 13px; }
    .layer .thumb { display: grid; place-items: center; width: 18px; height: 18px; margin: 1px 0 1px 2px; border: 1px solid #ccc; background: #fff; }
    .thumb .ico { width: 15px; height: 15px; }
    .name { padding-left: 7px; color: #222; text-align: left; display: block; }
    .layer.on { background: #c8e6f8; }
    .gutter { width: 11px; border-left: 1px solid #bfbfc3; display: flex; flex-direction: column; justify-content: space-between; }
    .gutter span { height: 11px; border-bottom: 1px solid #bfbfc3; }
    .gutter span:last-child { border-bottom: 0; border-top: 1px solid #bfbfc3; }
    .w4 { height: 62px; }
    .foot .list { height: 44px; }
  `];
  private layer(name: string, thumb: string, eye: boolean, pen: boolean, cls = "") {
    return html`<div class="layer ${cls}">
      <button class="cell" aria-label="表示切り替え">${eye ? icon("eye") : nothing}</button>
      <button class="cell" aria-label="描画対象">${pen ? icon("dip") : nothing}</button>
      <span class="thumb">${icon(thumb)}</span>
      <button class="name">${name}</button>
    </div>`;
  }
  render() {
    const b = (n: string, l: string, c = "") => html`<button class=${c} aria-label=${l}>${icon(n)}</button>`;
    return html`
      <div class="box tools">
        ${b("newlayer", "新規レイヤー")}${b("mergelayer", "結合")}${b("masklayer", "マスク")}${b("folder", "フォルダ")}${b("trash", "削除")}
        <span class="sep"></span>${b("mask", "マスク表示", "wide")}${b("maskapply", "マスク適用", "wide")}<span class="sep"></span>
        ${b("lock", "ロック", "lock")}${b("frame", "範囲", "frame")}
      </div>
      <div class="box blend">
        <label class="mode"><select aria-label="合成モード"><option>通常</option></select>${dropMark}</label>
        <input class="level" type="range" min="0" max="100" value="100" aria-label="レイヤー不透明度">
        <input class="num" type="text" value="100" aria-label="レイヤー不透明度の値">
        ${spinner("レイヤー不透明度")}
      </div>
      <div class="row main">
        <div class="tabs">
          <button class="tab on">画像</button><button class="tab w4">選択範囲</button><button class="tab">定規</button>
        </div>
        <div class="box list">
          <div class="rows">${this.layer("レイヤー", "raster", true, true, "on")}</div>
          <div class="gutter"><span></span><span></span></div>
        </div>
      </div>
      <div class="row foot">
        <div class="tabs"><button class="tab on">用紙</button></div>
        <div class="box list">
          <div class="rows">${this.layer("グリッドレイヤー", "gridlayer", false, false)}${this.layer("用紙", "paper", true, false, "low")}</div>
          <div class="gutter"><span></span><span></span></div>
        </div>
      </div>`;
  }
}

const appLogo = html`<svg class="logo" viewBox="0 0 32 32" aria-hidden="true">
  <defs><linearGradient id="lg" x2="1" y2="1"><stop offset="0" stop-color="#fbfbfb"/><stop offset="1" stop-color="#d9d9d9"/></linearGradient></defs>
  <rect width="32" height="32" fill="url(#lg)"/><rect width="32" height="3" fill="#f39a0b"/>
  <path d="M12 4H19L21 9L18 12L19 19L16 22L13 20L14 12L10 9Z" fill="#f39a0b"/>
  <rect x="14" y="23" width="5" height="3" fill="#bbb"/><path d="M13 27H19L18 31H14Z" fill="#8d8d8d"/></svg>`;

const TITLE = "IllustStudio 体験版 : あと 30 日間すべての機能を使用可能です - 次のライセンス照合は 30 日後です。 - [[新規キャンバス] (1024 * 768px 72dpi)";
const TITLE_LAYER = "レイヤー(ラスターレイヤー カラー(...";
const MENUS = ["ファイル(F)", "編集(E)", "表示(V)", "選択(S)", "レイヤー(L)", "定規(R)", "フィルタ(I)", "ウィンドウ(W)", "パレット(P)", "ヘルプ(H)"];

const restoreShape = svg`<path d="M3 3V1H15V12H13" fill="none" stroke="#222" stroke-width="1.500"/><rect x="1" y="4" width="11" height="11" fill="none" stroke="#222" stroke-width="1.500"/><rect x="1" y="4" width="11" height="3" fill="#222"/>`;

const endMark = html`<svg class="endmark" viewBox="0 0 7 8" aria-hidden="true"><path d="M0 0H7L3.500 4Z" fill="#000"/><rect y="5" width="7" height="2" fill="#000"/></svg>`;

@customElement("app-root")
class AppRoot extends LitElement {
  static styles = [shared, css`
    :host { display: grid; grid-template-rows: 45px 38px 23px minmax(0, 1fr) 36px; height: 100vh; min-height: 900px; background: #f2f2f4; overflow: hidden; }
    .title { display: flex; align-items: center; background: #fcfcfc; border-bottom: 1px solid #d5d5d5; padding: 0 3px 0 2px; }
    .logo { width: 32px; height: 32px; flex: none; }
    .title h1 { display: flex; gap: 34px; flex: 1; min-width: 0; margin: 0 0 0 5px; padding-top: 4px; font-size: 30px; line-height: 40px; font-weight: 400; white-space: nowrap; color: #222; }
    .title .kana { font-size: 26px; }
    .title .layer .kana { font-size: 25px; }
    .title .stop { font-size: 26px; font-feature-settings: normal; }
    .winbtns { display: flex; align-self: start; flex: none; }
    .winbtns button { width: 56px; height: 40px; }
    .winbtns .low { width: 50px; }
    .winbtns .close { width: 92px; background: #c75050; }
    .winbtns svg { width: 18px; height: 18px; }
    .menubar { display: flex; align-items: center; background: #f4f5f8; border-bottom: 1px solid #e4e4e6; padding: 0 2px 0 7px; }
    nav { display: flex; gap: 16px; flex: 1; margin-left: 7px; padding-top: 3px; font-size: 24px; line-height: 34px; color: #000; }
    nav button { display: block; white-space: nowrap; }
    nav .kana { font-size: 21px; }
    .mdi { display: flex; gap: 2px; }
    .mdi button { width: 36px; height: 37px; border: 1px solid #93a2b5; background: linear-gradient(#f2f8ff 0 4px, #deebf8 4px); }
    .mdi svg { width: 9px; height: 9px; opacity: .6; }
    .toolbar { display: flex; align-items: center; gap: 3px; padding-left: 1px; background: #f2f2f4; font-size: 12px; color: #111; }
    .grp { display: flex; align-items: center; }
    .grip { width: 4px; height: 13px; background: radial-gradient(circle at 1px 1px, #888 0 1px, transparent 1px) 0 0 / 4px 4px; }
    .tb { width: 21px; height: 20px; margin-right: 1px; background: #e8e8ea; display: grid; place-items: center; }
    .tb.sel { background: #f2f2f4; }
    .tb .ico { width: 18px; height: 18px; filter: drop-shadow(1px 1px 1px #bbb); }
    .combo { display: flex; align-items: center; background: #f6f6f9; height: 20px; padding-left: 4px; }
    .combo select { width: 76px; height: 20px; }
    .combo.long select { width: 139px; }
    .combo .drop { margin: 5px 1px 0 0; }
    .clip { width: 40px; height: 20px; background: #e8e8ea; margin-left: 2px; }
    .clip svg { width: 38px; height: 16px; }
    .work { display: grid; grid-template-columns: minmax(0, 1fr) 12px 301px; grid-template-rows: minmax(0, 1fr) 12px; min-height: 0; }
    .view { grid-area: 1 / 1; display: grid; place-items: center; padding: 0 2px 1px 0; background: #c8c8c8; }
    .page { width: 713px; height: 535px; background: #fff; }
    .docks { grid-area: 1 / 1; z-index: 1; display: flex; align-items: flex-start; justify-self: start; }
    .dock { background: #999; padding: 12px 0 0 2px; border-bottom: 1px solid #7e7e7e; display: grid; grid-template-columns: minmax(0, 1fr) auto; }
    .d1 { width: 84px; }
    .d2 { width: 144px; }
    .edge { width: 6px; display: grid; place-items: center; padding-bottom: 12px; }
    .edge svg { width: 4px; height: 8px; }
    .nav { display: block; height: 121px; border: 1px solid #c4c4c6; outline: 1px solid #666; outline-offset: -2px; background: #e8e8ea; }
    .endmark { width: 7px; height: 8px; margin: 2px; }
    .vbar { grid-area: 1 / 2; }
    .hrow { grid-area: 2 / 1; display: flex; background: #e8e8ea; min-width: 0; }
    .hrow scroll-bar { flex: 1; }
    .corner { grid-area: 2 / 2; background: #e8e8ea; }
    .zoomer { display: grid; width: 100px; border: 1px solid #8d8d8d; border-width: 1px 1px 1px 0; overflow: hidden; background: linear-gradient(6deg, #a0a0a0 50%, #f6f6f6 51%); }
    .zoomer > * { grid-area: 1 / 1; }
    .zoomer output { font-size: 10px; line-height: 10px; padding-left: 1px; color: #111; }
    .zoomer input { width: 100%; height: 10px; }
    .zoomer input::-webkit-slider-thumb { appearance: none; width: 13px; height: 10px; border-radius: 6px 6px 0 0; border: 1px solid #333; background: #eee; }
    .zb { width: 22px; height: 12px; }
    .zb .ico { width: 15px; height: 15px; }
    .side { grid-area: 1 / 3 / 3 / 4; background: #999; display: flex; min-height: 0; padding: 12px 2px 84px 0; }
    .side .edge { padding: 72px 0 0; }
    .sidecol { flex: 1; display: flex; flex-direction: column; min-width: 0; }
    .grow { flex: 1; min-height: 0; }
    .eject { grid-area: 2 / 3; align-self: start; justify-self: end; z-index: 1; width: 8px; height: 8px; margin: 1px 2px 0 0; }
    .status { display: flex; border-top: 1px solid #d5d5d5; padding-bottom: 3px; background: linear-gradient(#f0f0f0 0 33px, #aaa 33px 34px, #c8c8c8 34px); }
    .status .a { width: 130px; border-right: 1px solid #d5d5d5; }
    .status .b { flex: 1; border-right: 1px solid #d5d5d5; }
    .status .c { width: 90px; padding: 8px 0 0 4px; }
    .status svg { width: 64px; height: 24px; }
  `];

  render() {
    const tb = (n: string, l: string) => html`<button class="tb" aria-label=${l}>${icon(n)}</button>`;
    return html`
      <header class="title">
        ${appLogo}
        <h1><span>${mixed(TITLE)}</span><span class="layer">${mixed(TITLE_LAYER)}</span></h1>
        <div class="winbtns">
          <button class="low" aria-label="最小化"><svg viewBox="0 0 18 18"><rect x="1" y="13" width="16" height="3" fill="#222"/></svg></button>
          <button aria-label="元に戻す"><svg viewBox="0 0 18 18"><path d="M4 4V1H17V12H14" fill="none" stroke="#222" stroke-width="2"/><rect x="1" y="5" width="13" height="11" fill="none" stroke="#222" stroke-width="2"/><rect x="1" y="5" width="13" height="4" fill="#222"/></svg></button>
          <button class="close" aria-label="閉じる"><svg viewBox="0 0 18 18"><path d="M3 3L15 15M15 3L3 15" stroke="#fff" stroke-width="2.200"/></svg></button>
        </div>
      </header>
      <div class="menubar">
        ${appLogo}
        <nav>${MENUS.map(m => html`<button>${mixed(m)}</button>`)}</nav>
        <div class="mdi">
          <button aria-label="キャンバスを最小化"><svg viewBox="0 0 16 16"><rect x="2" y="11" width="12" height="3" fill="#222"/></svg></button>
          <button aria-label="キャンバスを元に戻す"><svg viewBox="0 0 16 16">${restoreShape}</svg></button>
          <button aria-label="キャンバスを閉じる"><svg viewBox="0 0 16 16"><path d="M3 2L13 14M13 2L3 14" stroke="#222" stroke-width="3.500"/></svg></button>
        </div>
      </div>
      <div class="toolbar">
        <div class="grp"><span class="grip"></span>${tb("gear", "環境設定")}</div>
        <div class="grp"><span class="grip"></span>${tb("newdoc", "新規")}${tb("open", "開く")}${tb("save", "保存")}${tb("saveall", "別名で保存")}</div>
        <div class="grp"><span class="grip"></span>${tb("cut", "切り取り")}${tb("copy", "コピー")}${tb("paste", "貼り付け")}${tb("burst", "消去")}${tb("undo", "取り消し")}${tb("redo", "やり直し")}${tb("fillsel", "塗りつぶし")}</div>
        <div class="grp"><span class="grip"></span><span class="tb sel">${icon("closedfill")}</span><label class="combo"><select aria-label="ツール"><option>閉領域フィル</option></select>${dropMark}</label></div>
        <div class="grp"><span class="grip"></span><span class="tb sel">${icon("closedfill")}</span><label class="combo long"><select aria-label="参照先"><option>編集レイヤーのみ参照</option></select>${dropMark}</label></div>
        <div class="grp"><span class="grip"></span><button class="clip" aria-label="CLIP"><svg viewBox="0 0 38 16"><rect x="1" y="1" width="35" height="13" rx="6" fill="#16a5b8"/><g fill="none" stroke="#fff" stroke-width="2"><path d="M11 4.500H8Q5 4.500 5 7.500T8 10.500H11M14 3V10.500H19M21.500 6V12M25 13V5H29Q32 5 32 7.500T29 10H25"/></g><circle cx="21.500" cy="4" r="1" fill="#fff"/></svg></button></div>
      </div>
      <main class="work">
        <div class="view"><div class="page"></div></div>
        <div class="docks">
          <div class="dock d1">
            <div class="col">
              <tool-panel><tool-palette></tool-palette></tool-panel>
              <tool-panel><div class="nav"></div></tool-panel>
              ${endMark}
            </div>
            <div class="edge"><svg viewBox="0 0 4 8"><path d="M4 0V8L0 4Z"/></svg></div>
          </div>
          <div class="dock d2">
            <div class="col">
              <tool-panel heading="ツールスタイル"><style-palette></style-palette></tool-panel>
              ${endMark}
            </div>
            <div class="edge"><svg viewBox="0 0 4 8"><path d="M4 0V8L0 4Z"/></svg></div>
          </div>
        </div>
        <scroll-bar class="vbar" .parts=${[302, 657, 302]}></scroll-bar>
        <div class="hrow">
          <div class="zoomer">
            <output>69.5%</output>
            <input type="range" min="0" max="100" value="64" aria-label="表示倍率">
          </div>
          <button class="zb" aria-label="縮小">${icon("zoomout")}</button>
          <button class="zb" aria-label="拡大">${icon("zoomin")}</button>
          <scroll-bar dir="h" .parts=${[468, 1145, 467]}></scroll-bar>
        </div>
        <div class="corner"></div>
        <aside class="side">
          <div class="edge"><svg viewBox="0 0 4 8"><path d="M0 0V8L4 4Z"/></svg></div>
          <div class="sidecol">
            <tool-panel right folded heading="カラーセット"></tool-panel>
            <tool-panel right heading="カラー"><color-palette></color-palette></tool-panel>
            <tool-panel class="grow" right heading="レイヤー"><layer-palette></layer-palette></tool-panel>
          </div>
        </aside>
        <svg class="eject" viewBox="0 0 8 8" aria-hidden="true"><path d="M0 4L4 0L8 4Z"/><rect y="5" width="8" height="2"/></svg>
      </main>
      <footer class="status">
        <div class="a"></div><div class="b"></div>
        <div class="c"><svg viewBox="0 0 64 24" aria-hidden="true">
          <g stroke="#999" fill="none"><path d="M.5 4.500H47.500M.5 8.500H47.500M.5 12.500H47.500M.5 16.500H47.500M.5 20.500H47.500"/><path d="M.5 4.500V20.500M5.500 4.500V20.500M10.500 4.500V20.500M15.500 4.500V20.500M20.500 4.500V20.500M24.500 4.500V20.500M29.500 4.500V20.500M34.500 4.500V20.500M39.500 4.500V20.500M43.500 4.500V20.500M47.500 4.500V20.500"/></g>
          <circle cx="57" cy="9" r="6.500" fill="#666"/><circle cx="54" cy="9" r="6.500" fill="#f3d9b4" stroke="#c98a3c"/><path d="M51 14L54 18L57 14Z" fill="#d98b2b"/><path d="M52 8H55V13M51 13H57" stroke="#111" stroke-width="2" fill="none"/><rect x="53" y="4" width="2.500" height="2.500" fill="#111"/>
        </svg></div>
      </footer>`;
  }
}
